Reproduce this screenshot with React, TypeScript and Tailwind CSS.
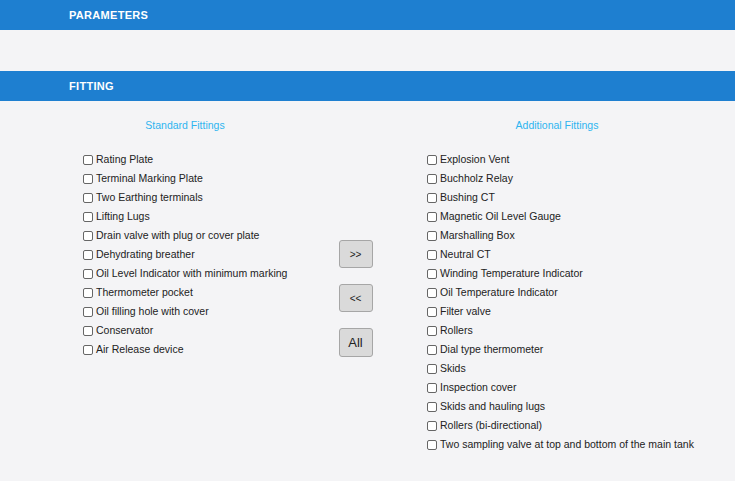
import { useState } from 'react'

const STANDARD = [
  'Rating Plate',
  'Terminal Marking Plate',
  'Two Earthing terminals',
  'Lifting Lugs',
  'Drain valve with plug or cover plate',
  'Dehydrating breather',
  'Oil Level Indicator with minimum marking',
  'Thermometer pocket',
  'Oil filling hole with cover',
  'Conservator',
  'Air Release device',
]

const ADDITIONAL = [
  'Explosion Vent',
  'Buchholz Relay',
  'Bushing CT',
  'Magnetic Oil Level Gauge',
  'Marshalling Box',
  'Neutral CT',
  'Winding Temperature Indicator',
  'Oil Temperature Indicator',
  'Filter valve',
  'Rollers',
  'Dial type thermometer',
  'Skids',
  'Inspection cover',
  'Skids and hauling lugs',
  'Rollers (bi-directional)',
  'Two sampling valve at top and bottom of the main tank',
]

function SectionBar({ title }: { title: string }) {
  return (
    <div className="h-[30px] bg-[#1e7fd0] pl-[69px] flex items-center">
      <span className="text-[11px] font-bold text-white tracking-[0.3px]">{title}</span>
    </div>
  )
}

function FittingList({ title, items, checked, onToggle }: {
  title: string
  items: string[]
  checked: Record<string, boolean>
  onToggle: (name: string) => void
}) {
  return (
    <div className="flex flex-col">
      <p className="text-center text-[10.5px] leading-[13px] text-[#2eb4f0]">{title}</p>
      <div className="mt-[18px] px-[14px] flex flex-col">
        {items.map(item => (
          <label key={item} className="h-[19px] flex items-center text-[10.5px] text-[#222] whitespace-nowrap">
            <input
              type="checkbox"
              checked={!!checked[item]}
              onChange={() => onToggle(item)}
              className="w-[10px] h-[10px] m-0 mr-[3px] shrink-0 appearance-none border border-[#666] rounded-[2px] bg-white checked:bg-[#1e7fd0]"
            />
            {item}
          </label>
        ))}
      </div>
    </div>
  )
}

export default function App() {
  const [checked, setChecked] = useState<Record<string, boolean>>({})
  const toggle = (name: string) => setChecked(v => ({ ...v, [name]: !v[name] }))

  return (
    <div className="min-h-[481px] bg-[#f4f4f6]" style={{ fontFamily: '"Liberation Sans", Arial, sans-serif' }}>
      <SectionBar title="PARAMETERS" />
      <div className="h-[41px]" />
      <SectionBar title="FITTING" />

      <div className="flex pt-[18px]">
        <div className="ml-[69px] w-[232px]">
          <FittingList title="Standard Fittings" items={STANDARD} checked={checked} onToggle={toggle} />
        </div>
        <div className="w-[112px] flex flex-col items-center pt-[121px] gap-[16px] pr-[3px]">
          <button className="w-[34px] h-[28px] bg-[#dadada] border border-[#a6a6a6] rounded-[3px] text-[10px] text-[#222]">&gt;&gt;</button>
          <button className="w-[34px] h-[28px] bg-[#dadada] border border-[#a6a6a6] rounded-[3px] text-[10px] text-[#222]">&lt;&lt;</button>
          <button className="w-[34px] h-[29px] bg-[#dadada] border border-[#a6a6a6] rounded-[3px] text-[13px] text-[#222]">All</button>
        </div>
        <div className="w-[288px]">
          <FittingList title="Additional Fittings" items={ADDITIONAL} checked={checked} onToggle={toggle} />
        </div>
      </div>
    </div>
  )
}
